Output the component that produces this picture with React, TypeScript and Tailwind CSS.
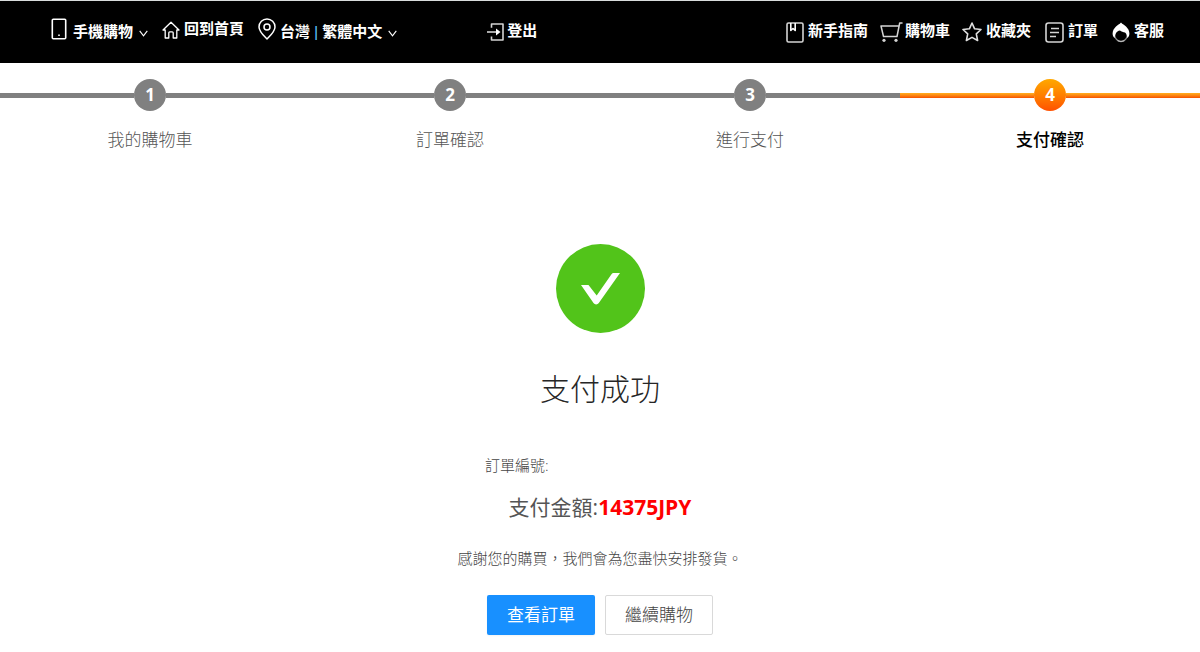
import type { ReactNode } from 'react';
import { clsx } from 'clsx';

const STEPS = ['我的購物車', '訂單確認', '進行支付', '支付確認'];
const CURRENT_STEP = 3;

function PhoneIcon() {
  return (
    <svg width="16" height="22" viewBox="0 0 16 22" fill="none" stroke="currentColor" strokeWidth="1.6">
      <rect x="1.3" y="1.3" width="13.4" height="19.4" rx="1" />
      <path d="M7.2 17.2h1.6" />
    </svg>
  );
}

function HomeIcon() {
  return (
    <svg width="18" height="18" viewBox="0 0 18 18" fill="none" stroke="currentColor" strokeWidth="1.3" strokeLinejoin="round" strokeLinecap="round">
      <path d="M1 9 9 1.2 17 9h-2.2v8h-3.6v-5.2c0-.6-.4-1-1-1H7.8c-.6 0-1 .4-1 1V17H3.2V9H1Z" />
    </svg>
  );
}

function PinIcon() {
  return (
    <svg width="18" height="22" viewBox="0 0 18 22" fill="none" stroke="currentColor" strokeWidth="1.5" strokeLinejoin="round">
      <path d="M9 21C5.5 17.5 1 13.5 1 9a8 8 0 0 1 16 0c0 4.5-4.5 8.5-8 12Z" />
      <circle cx="9" cy="9" r="3" />
    </svg>
  );
}

function ChevronIcon() {
  return (
    <svg width="9" height="7" viewBox="0 0 9 7" fill="none" stroke="currentColor" strokeWidth="1.1">
      <path d="m.7.8 3.8 5L8.3.8" />
    </svg>
  );
}

function LogoutIcon() {
  return (
    <svg width="18" height="18" viewBox="0 0 18 18" fill="none" stroke="#d4d4d4" strokeWidth="1.6">
      <path d="M4.5 4.8V1H16v16H4.5v-3.5" strokeLinejoin="round" />
      <path d="M0 9h11" />
      <path d="M9 5.5 13.5 9 9 12.5Z" fill="#fff" stroke="none" />
    </svg>
  );
}

function GuideIcon() {
  return (
    <svg width="18" height="21" viewBox="0 0 18 21" fill="none" stroke="#d4d4d4" strokeWidth="1.6" strokeLinejoin="round">
      <rect x="1" y="1" width="16" height="19" rx="1.5" />
      <path d="M4.8 1v7.5l2.2-2 2.2 2V1" stroke="#fff" />
    </svg>
  );
}

function CartIcon() {
  return (
    <svg width="23" height="20" viewBox="0 0 23 20" fill="none" stroke="#d4d4d4" strokeWidth="1.5" strokeLinejoin="round" strokeLinecap="round">
      <path d="M22 1h-2.3L17 14.5H3.5L1 4h18" />
      <circle cx="4" cy="18.3" r="1.6" fill="#d4d4d4" stroke="none" />
      <circle cx="16" cy="18.3" r="1.6" fill="#d4d4d4" stroke="none" />
    </svg>
  );
}

function StarIcon() {
  return (
    <svg width="20" height="20" viewBox="0 0 20 20" fill="none" stroke="#e0e0e0" strokeWidth="1.6" strokeLinejoin="round">
      <path d="m10 1 2.6 5.8 6.4.7-4.7 4.3 1.3 6.7L10 15.4l-5.600 3.1 1.3-6.7L1 7.5l6.4-.7L10 1Z" />
    </svg>
  );
}

function OrderIcon() {
  return (
    <svg width="19" height="21" viewBox="0 0 19 21" fill="none" stroke="#d4d4d4" strokeWidth="1.6">
      <rect x="1" y="1" width="17" height="19" rx="2.5" />
      <path d="M6 6.500h8M5 10.500h9M5 14.500h6" strokeWidth="1.4" />
    </svg>
  );
}

function ServiceIcon() {
  return (
    <svg width="18" height="22" viewBox="0 0 18 22" fill="none">
      <circle cx="9" cy="14" r="6.3" stroke="#8a8a8a" strokeWidth="1.2" />
      <path d="M9 1.5c-1.5 1.7-3.5 2.5-5 4C1.8 7.6.6 10 .6 12.500c0 2 .8 3.500 2.200 4.500.1-3.500 1.200-7 5.200-7.600 1.200 1.500 3.400 1.200 5 2.200 1.600 1 2.100 3 2.200 5.400 1.400-1 2.200-2.500 2.200-4.500 0-2.500-1.200-4.900-3.400-7-1.500-1.500-3.500-2.300-5-4Z" fill="#fff" />
      <path d="M5.5 19.5c2 1.200 5 1.200 7 0" stroke="#bbb" strokeWidth="1.3" />
    </svg>
  );
}

function NavLink({ icon, label, className }: { icon: ReactNode; label: string; className?: string }) {
  return (
    <a href="#" className={clsx('flex items-center whitespace-nowrap', className)}>
      <span className="shrink-0">{icon}</span>
      <span className="pb-1">{label}</span>
    </a>
  );
}

function TopBar() {
  return (
    <header className="flex h-[63px] items-center justify-between border-t border-[#d8dcdc] bg-black pr-9 pl-[51px] text-[15px] leading-5 font-bold text-white">
      <nav className="flex items-center" aria-label="主選單">
        <button type="button" className="flex items-center gap-1.5 pb-1.5 font-bold">
          <PhoneIcon />
          <span className="pt-1">手機購物</span>
          <span className="pt-2"><ChevronIcon /></span>
        </button>
        <NavLink icon={<HomeIcon />} label="回到首頁" className="ml-3.5 gap-1 pb-1" />
        <button type="button" className="ml-3.5 flex items-center gap-1 pb-1.5 font-bold">
          <PinIcon />
          <span className="pt-1">
            台灣<span className="px-0.5 font-semibold text-[#5bc0f8]">|</span>繁體中文
          </span>
          <span className="pt-2 pl-0.5"><ChevronIcon /></span>
        </button>
        <NavLink icon={<LogoutIcon />} label="登出" className="ml-[90px] gap-0.5" />
      </nav>

      <nav className="flex items-center" aria-label="會員選單">
        <NavLink icon={<GuideIcon />} label="新手指南" className="gap-1" />
        <NavLink icon={<CartIcon />} label="購物車" className="ml-3 gap-0.5" />
        <NavLink icon={<StarIcon />} label="收藏夾" className="ml-3 gap-1" />
        <NavLink icon={<OrderIcon />} label="訂單" className="ml-3.5 gap-1" />
        <NavLink icon={<ServiceIcon />} label="客服" className="ml-3.5 gap-1" />
      </nav>
    </header>
  );
}

function Steps() {
  return (
    <ol className="grid grid-cols-4 pt-4">
      {STEPS.map((label, index) => {
        const active = index === CURRENT_STEP;
        const line = clsx(
          'h-[5px] flex-1',
          active ? 'bg-linear-to-b from-[#ffb020] to-[#f55000]' : 'bg-[#808080]'
        );
        return (
          <li key={label} aria-current={active ? 'step' : undefined}>
            <div className="flex items-center">
              <span className={line} />
              <span
                className={clsx(
                  'flex size-8 items-center justify-center rounded-full text-[17px] leading-6 font-bold text-white',
                  active ? 'bg-linear-to-b from-[#ffa800] to-[#ff5000]' : 'bg-[#808080]'
                )}
              >
                {index + 1}
              </span>
              <span className={line} />
            </div>
            <p
              className={clsx(
                'mt-[17px] text-center text-[17px] leading-6',
                active ? 'font-medium text-black' : 'font-light text-[#555]'
              )}
            >
              {label}
            </p>
          </li>
        );
      })}
    </ol>
  );
}

function PaymentResult() {
  return (
    <main className="flex flex-col items-center pt-[92px] pb-4">
      <svg width="89" height="89" viewBox="0 0 89 89" role="img" aria-label="成功">
        <circle cx="44.5" cy="44.5" r="44.5" fill="#52c41a" />
        <path d="M25 41h7.500l8.200 10.500L55.500 30.200c.6-.9 1.300-1.200 2.300-1.200H64L42.800 59c-1.300 1.900-4 1.900-5.300 0L25 41Z" fill="#fff" />
      </svg>

      <h1 className="mt-9 text-[30px] leading-10 font-light text-[#262626]">支付成功</h1>

      <p className="mt-11 w-[230px] text-[15px] leading-6 font-light text-[#444]">訂單編號:</p>
      <p className="mt-3.5 text-[21px] leading-8 text-[#555]">
        支付金額:<strong className="font-bold text-[#ff0000]">14375JPY</strong>
      </p>
      <p className="mt-[23px] text-[15px] leading-6 font-light text-[#444]">
        感謝您的購買，我們會為您盡快安排發貨。
      </p>

      <div className="mt-[25px] flex gap-2.5 text-[17px] leading-6">
        <button type="button" className="h-10 w-[108px] rounded-xs bg-[#1890ff] text-white shadow-xs">
          查看訂單
        </button>
        <button type="button" className="h-10 w-[108px] rounded-xs border border-[#d9d9d9] bg-white font-light text-[#444]">
          繼續購物
        </button>
      </div>
    </main>
  );
}

export default function App() {
  return (
    <div lang="zh-Hant" className="bg-white font-['Open_Sans','Noto_Sans_CJK_TC',sans-serif]">
      <TopBar />
      <Steps />
      <PaymentResult />
    </div>
  );
}
